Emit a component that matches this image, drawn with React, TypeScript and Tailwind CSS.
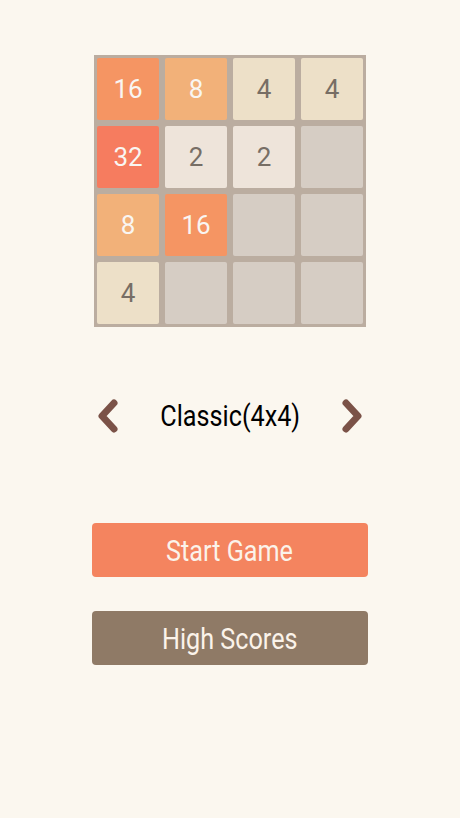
import React from 'react';

const tiles = [16, 8, 4, 4, 32, 2, 2, 0, 8, 16, 0, 0, 4, 0, 0, 0];

const tileStyle: Record<number, string> = {
  0: 'bg-[#d6cdc4]',
  2: 'bg-[#eee4da] text-[#776e65]',
  4: 'bg-[#ede0c8] text-[#776e65]',
  8: 'bg-[#f2b179] text-[#f9f6f2]',
  16: 'bg-[#f59563] text-[#f9f6f2]',
  32: 'bg-[#f67c5f] text-[#f9f6f2]',
};

function Chevron({ dir }: { dir: 'left' | 'right' }) {
  return (
    <svg width="24" height="36" viewBox="0 0 24 36">
      <path
        d={dir === 'left' ? 'M18 5 L6 18 L18 31' : 'M6 5 L18 18 L6 31'}
        fill="none"
        stroke="#7b5247"
        strokeWidth="7"
        strokeLinecap="round"
        strokeLinejoin="round"
      />
    </svg>
  );
}

function MenuButton({ label, color }: { label: string; color: string }) {
  return (
    <button className={`w-[276px] h-[54px] rounded-[4px] flex items-center justify-center ${color}`}>
      <span className="inline-block scale-x-[0.84] text-[30px] text-[#fbf3ea] font-['Roboto',sans-serif]">{label}</span>
    </button>
  );
}

export default function App() {
  return (
    <div className="min-h-screen w-[460px] h-[818px] bg-[#fbf7ef] flex flex-col items-center">
      <div className="mt-[55px] w-[272px] h-[272px] bg-[#bbada0] p-[3px] grid grid-cols-4 gap-[6px]">
        {tiles.map((t, i) => (
          <div
            key={i}
            className={`rounded-[2px] flex items-center justify-center text-[26px] font-['Roboto',sans-serif] ${tileStyle[t]}`}
          >
            {t ? t : ''}
          </div>
        ))}
      </div>

      <div className="mt-[66px] w-[268px] flex items-center justify-between">
        <Chevron dir="left" />
        <span className="inline-block scale-x-[0.84] text-[30px] text-black font-['Roboto',sans-serif]">Classic(4x4)</span>
        <Chevron dir="right" />
      </div>

      <div className="mt-[85px] flex flex-col gap-[34px]">
        <MenuButton label="Start Game" color="bg-[#f4845f]" />
        <MenuButton label="High Scores" color="bg-[#8f7a66]" />
      </div>
    </div>
  );
}
